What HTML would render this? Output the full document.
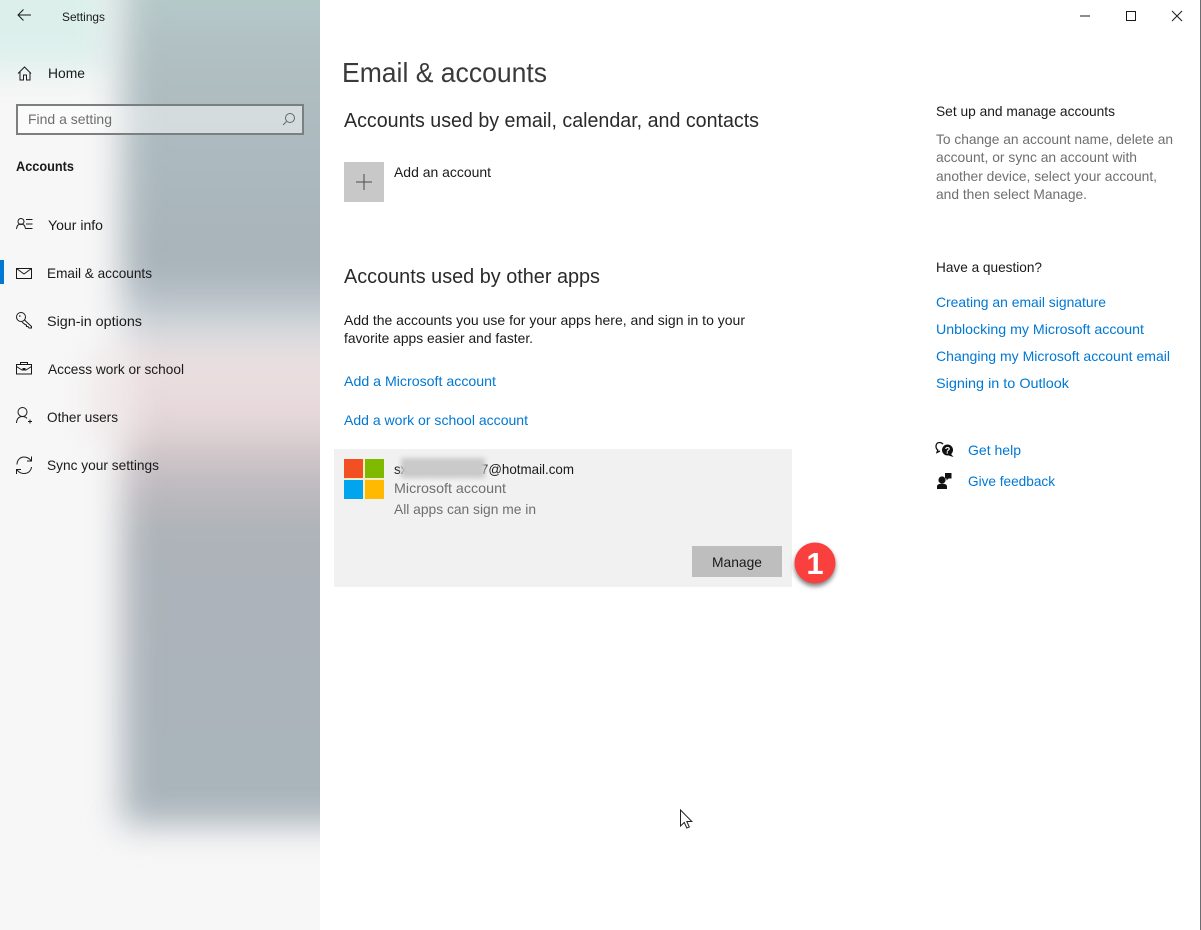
<!DOCTYPE html>
<html lang="en"><head><meta charset="utf-8"><title>Settings</title>
<style>
html,body{margin:0;padding:0;background:#fff;width:1201px;height:930px;overflow:hidden}
svg{display:block;position:absolute;left:0;top:0}
text{font-family:"Liberation Sans",sans-serif;font-size:14px;fill:#1a1a1a}
.l{fill:#0078d4}.g{fill:#6f6f6f}
.i{fill:none;stroke:#1a1a1a;stroke-width:1}
</style></head><body>
<svg width="1201" height="930" viewBox="0 0 1201 930" xmlns="http://www.w3.org/2000/svg">
<defs>
<clipPath id="c"><rect width="320" height="930"/></clipPath>
<filter id="b" x="-50%" y="-50%" width="200%" height="200%" color-interpolation-filters="sRGB"><feGaussianBlur stdDeviation="17"/></filter>
<filter id="b2" x="-80%" y="-50%" width="260%" height="200%" color-interpolation-filters="sRGB"><feGaussianBlur stdDeviation="16"/></filter>
<filter id="bs" x="-5%" y="-50%" width="110%" height="200%" color-interpolation-filters="sRGB"><feGaussianBlur stdDeviation="2.500"/></filter>
<filter id="sh" x="-40%" y="-40%" width="180%" height="180%" color-interpolation-filters="sRGB"><feDropShadow dx="0" dy="3" stdDeviation="2.500" flood-color="#000" flood-opacity=".5"/></filter>
<linearGradient id="top" x1="0" y1="0" x2="0" y2="1"><stop offset="0" stop-color="#b9cfcd"/><stop offset=".3" stop-color="#b0bfc2"/><stop offset="1" stop-color="#a7b2b9"/></linearGradient>
<linearGradient id="mid" x1="0" y1="0" x2="0" y2="1">
<stop offset="0" stop-color="#a7b2b9"/><stop offset=".06" stop-color="#bcc5cb"/><stop offset=".11" stop-color="#d8dcdf"/><stop offset=".17" stop-color="#ecdfe0"/><stop offset=".27" stop-color="#e6d8da"/><stop offset=".37" stop-color="#c3bcc0"/><stop offset=".47" stop-color="#adb3b9"/><stop offset="1" stop-color="#a9b4bb"/></linearGradient>
</defs>
<g clip-path="url(#c)">
<rect width="320" height="930" fill="#f7f7f7"/>
<rect x="-40" y="-40" width="150" height="110" fill="#dcefeb" filter="url(#b)"/>
<g filter="url(#b)">
<rect x="122" y="-40" width="260" height="320" fill="url(#top)"/>
<rect x="122" y="270" width="260" height="555" fill="url(#mid)"/>
</g>
<rect x="85" y="350" width="50" height="90" fill="#eee4e5" filter="url(#b2)" opacity=".6"/>
</g>
<rect x="1200" y="0" width="1" height="930" fill="#6a6e72"/>

<path class="i" d="M31 16H18M23.500 10.500 18 16l5.500 5.500" transform="translate(0 -1)"/>
<text x="62" y="21" style="font-size:12px" textLength="43" lengthAdjust="spacingAndGlyphs">Settings</text>

<path class="i" d="M18 73.500 24.500 67 31 73.500M20 72v8h3.500v-5h3v5H30v-8"/>
<text x="48" y="78" textLength="37" lengthAdjust="spacingAndGlyphs">Home</text>

<rect x="17" y="105" width="286" height="29" fill="#fff" fill-opacity=".48" stroke="#7b7f82" stroke-width="2"/>
<text x="28" y="124" class="g" textLength="84" lengthAdjust="spacingAndGlyphs">Find a setting</text>
<circle cx="290" cy="118" r="4.500" class="i" style="stroke:#666"/><path class="i" style="stroke:#666" d="M286.500 121.500 283 125"/>

<text x="16" y="171" font-weight="700" textLength="58" lengthAdjust="spacingAndGlyphs">Accounts</text>

<circle cx="21" cy="221.500" r="3" class="i"/><path class="i" d="M16.500 229c.3-3.500 2-5 4.500-5s4.200 1.500 4.500 5M26 219.500h6.500M26 224h6.500M26 228.500h6.500"/>
<text x="48" y="230" textLength="55" lengthAdjust="spacingAndGlyphs">Your info</text>

<rect x="0" y="260" width="4" height="24" fill="#0078d4"/>
<rect x="16.500" y="268.500" width="15" height="10" class="i"/><path class="i" d="M16.500 268.500 24 274l7.500-5.500"/>
<text x="47" y="278" textLength="105" lengthAdjust="spacingAndGlyphs">Email &amp; accounts</text>

<circle cx="21" cy="317" r="4.500" class="i"/><circle cx="19.800" cy="316" r=".8" fill="#1a1a1a"/><path class="i" d="M24.500 320 31.500 326.500v1.500h-2.500l-1-1.500h-1.500v-1.500l-1.500-.5-3-2.500"/>
<text x="47" y="326" textLength="95" lengthAdjust="spacingAndGlyphs">Sign-in options</text>

<rect x="16.500" y="364.500" width="15" height="9.500" class="i"/><path class="i" d="M20.500 364.500v-2h7v2M16.500 366.500 22 370h4l5.500-3.500"/><rect x="22.500" y="368" width="3" height="2.500" fill="#1a1a1a"/>
<text x="48" y="374" textLength="136" lengthAdjust="spacingAndGlyphs">Access work or school</text>

<circle cx="22.500" cy="412" r="4.500" class="i"/><path class="i" d="M16.500 423c.3-4.500 2.500-6.500 6-6.500 2 0 3.500.6 4.500 2M28 421.500h4M30 419.500v4"/>
<text x="47" y="422" textLength="71" lengthAdjust="spacingAndGlyphs">Other users</text>

<path class="i" d="M17 464.500c0-4.500 3.200-7.500 7-7.500 3 0 5 1 7 3.500M31.500 456.500v4.500H27M31.500 467c-.5 4-3.500 6.500-7.500 6.500-3 0-5-1-7-3.500M16.500 474v-4.500H21"/>
<text x="47" y="470" textLength="112" lengthAdjust="spacingAndGlyphs">Sync your settings</text>

<path d="M1080 16h10" stroke="#1a1a1a" stroke-width="1"/>
<rect x="1126.500" y="11.500" width="9" height="9" class="i"/>
<path class="i" d="M1172 11l10 10M1182 11l-10 10"/>

<text x="342" y="82" style="font-size:28px;fill:#3a3a3a" textLength="205" lengthAdjust="spacingAndGlyphs">Email &amp; accounts</text>
<text x="344" y="127" style="font-size:20px;fill:#2a2a2a" textLength="415" lengthAdjust="spacingAndGlyphs">Accounts used by email, calendar, and contacts</text>

<rect x="344" y="162" width="40" height="40" fill="#c8c8c8"/>
<path d="M356 182h16M364 174v16" stroke="#4a4a4a" stroke-width="1"/>
<text x="394" y="177" textLength="97" lengthAdjust="spacingAndGlyphs">Add an account</text>

<text x="344" y="283" style="font-size:20px;fill:#2a2a2a" textLength="256" lengthAdjust="spacingAndGlyphs">Accounts used by other apps</text>
<text x="344" y="325" textLength="401" lengthAdjust="spacingAndGlyphs">Add the accounts you use for your apps here, and sign in to your</text>
<text x="344" y="343" textLength="189" lengthAdjust="spacingAndGlyphs">favorite apps easier and faster.</text>
<text x="344" y="386" class="l" textLength="152" lengthAdjust="spacingAndGlyphs">Add a Microsoft account</text>
<text x="344" y="425" class="l" textLength="184" lengthAdjust="spacingAndGlyphs">Add a work or school account</text>

<rect x="334" y="449" width="458" height="138" fill="#f1f1f1"/>
<rect x="344" y="459" width="40" height="40" fill="#f3ecc8"/>
<rect x="344" y="459" width="19" height="19" fill="#f25022"/>
<rect x="365" y="459" width="19" height="19" fill="#7fba00"/>
<rect x="344" y="480" width="19" height="19" fill="#00a4ef"/>
<rect x="365" y="480" width="19" height="19" fill="#ffb900"/>
<text x="394" y="474" textLength="180" lengthAdjust="spacingAndGlyphs">sxxxxxxxxxxxx7@hotmail.com</text>
<rect x="401" y="458" width="84" height="20" fill="#cacaca" filter="url(#bs)"/>
<text x="394" y="493" class="g" textLength="112" lengthAdjust="spacingAndGlyphs">Microsoft account</text>
<text x="394" y="514" class="g" textLength="142" lengthAdjust="spacingAndGlyphs">All apps can sign me in</text>
<rect x="692" y="546" width="90" height="31" fill="#bebebe"/>
<text x="712" y="567" textLength="50" lengthAdjust="spacingAndGlyphs">Manage</text>

<circle cx="815" cy="563" r="20.500" fill="#f9403f" filter="url(#sh)"/>
<text x="815" y="574" text-anchor="middle" style="font-size:31px;fill:#fff;font-weight:700">1</text>

<text x="936" y="116" textLength="179" lengthAdjust="spacingAndGlyphs">Set up and manage accounts</text>
<text x="936" y="144" class="g" textLength="237" lengthAdjust="spacingAndGlyphs">To change an account name, delete an</text>
<text x="936" y="162" class="g" textLength="201" lengthAdjust="spacingAndGlyphs">account, or sync an account with</text>
<text x="936" y="181" class="g" textLength="221" lengthAdjust="spacingAndGlyphs">another device, select your account,</text>
<text x="936" y="199" class="g" textLength="151" lengthAdjust="spacingAndGlyphs">and then select Manage.</text>

<text x="936" y="272" textLength="106" lengthAdjust="spacingAndGlyphs">Have a question?</text>
<text x="936" y="307" class="l" textLength="170" lengthAdjust="spacingAndGlyphs">Creating an email signature</text>
<text x="936" y="334" class="l" textLength="208" lengthAdjust="spacingAndGlyphs">Unblocking my Microsoft account</text>
<text x="936" y="361" class="l" textLength="234" lengthAdjust="spacingAndGlyphs">Changing my Microsoft account email</text>
<text x="936" y="388" class="l" textLength="133" lengthAdjust="spacingAndGlyphs">Signing in to Outlook</text>

<path d="M943 444c-1-1-2.500-1.500-3.500-1.500-2.500 0-3.500 2-3.500 4 0 1.500.7 2.700 1.800 3.500l-.8 2.500 3-1.500" fill="none" stroke="#111" stroke-width="1.300"/>
<circle cx="947.500" cy="450" r="5.500" fill="#111"/><path d="M951 454l2.500 3-5-1.500z" fill="#111"/>
<text x="947.500" y="453.500" text-anchor="middle" style="font-size:9px;fill:#fff;font-weight:700">?</text>
<text x="968" y="455" class="l" textLength="53" lengthAdjust="spacingAndGlyphs">Get help</text>

<circle cx="942" cy="480" r="3.600" fill="#111"/><path d="M937 489v-2.500c0-1.800 1.500-2.800 5-2.800s5 1 5 2.800v2.500z" fill="#111"/>
<path d="M945 473h6.500v5.500h-3l-2 2v-2H945z" fill="#111"/>
<text x="968" y="486" class="l" textLength="87" lengthAdjust="spacingAndGlyphs">Give feedback</text>

<path d="M680.500 810v16l3.800-3.500 2.500 5.500 2.500-1-2.500-5.500h5z" fill="#fff" stroke="#222" stroke-width="1"/>
</svg>
</body></html>
